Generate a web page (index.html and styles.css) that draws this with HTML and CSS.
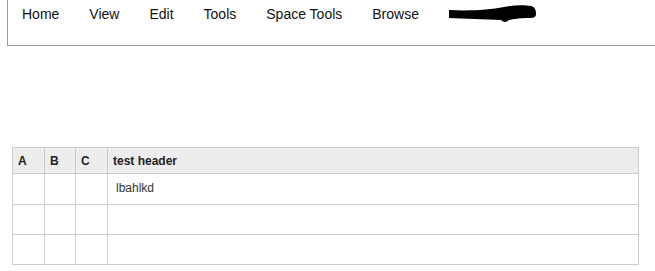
FILE: index.html
```html
<!DOCTYPE html>
<html lang="en">

<head>
    <meta charset="UTF-8">
    <meta name="viewport" content="width=device-width, initial-scale=1.0">
    <title>Page</title>
    <link rel="stylesheet" href="styles.css">
</head>

<body>
    <div class="topbar">
        <ul class="topbar__menu">
            <li>Home</li>
            <li>View</li>
            <li>Edit</li>
            <li>Tools</li>
            <li>Space Tools</li>
            <li>Browse</li>
            <li class="redacted">
                <svg width="88" height="20" viewBox="0 0 88 20">
                    <path d="M0 6 C20 7 40 6 55 3 C65 1 75 1 82 2 C86 3 87 6 87 10 C87 13 85 14 80 14 C70 14 65 15 60 16 C58 18 55 19 52 16 C35 15 15 15 0 14 Z" fill="#000" />
                </svg>
            </li>
        </ul>
    </div>

    <table class="grid">
        <thead>
            <tr>
                <th class="col-a">A</th>
                <th class="col-b">B</th>
                <th class="col-c">C</th>
                <th>test header</th>
            </tr>
        </thead>
        <tbody>
            <tr class="first">
                <td></td>
                <td></td>
                <td></td>
                <td><span class="cell-text">lbahlkd</span></td>
            </tr>
            <tr>
                <td></td>
                <td></td>
                <td></td>
                <td></td>
            </tr>
            <tr>
                <td></td>
                <td></td>
                <td></td>
                <td></td>
            </tr>
        </tbody>
    </table>
</body>

</html>
```

FILE: styles.css
```css
body {
    margin: 0;
    font-family: "Liberation Sans", Arial, sans-serif;
    background: #fff;
    overflow: hidden;
}

.topbar {
    margin-left: 7px;
    margin-right: -20px;
    height: 45px;
    border-left: 1px solid #9a9a9a;
    border-bottom: 1px solid #9a9a9a;
}

.topbar__menu {
    margin: 0;
    padding: 5px 0 0 14px;
    list-style: none;
    display: flex;
    align-items: flex-start;
    gap: 30px;
    font-size: 14px;
    line-height: 18px;
    color: #111;
}

.topbar__menu .redacted {
    display: flex;
    margin-top: -1px;
}

.grid {
    margin: 101px 0 0 12px;
    width: 627px;
    border-collapse: collapse;
    font-size: 12px;
    color: #333;
}

.grid th,
.grid td {
    border: 1px solid #ccc;
    padding: 0 5px;
    text-align: left;
}

.grid th {
    height: 25px;
    background: #ededed;
    font-weight: bold;
    color: #222;
}

.grid .col-a {
    width: 21px;
}

.grid .col-b {
    width: 20px;
}

.grid .col-c {
    width: 21px;
}

.grid td {
    height: 29px;
    vertical-align: middle;
}

.grid .first td {
    height: 23px;
    vertical-align: top;
    padding-top: 7px;
}

.grid .cell-text {
    padding-left: 3px;
}
```
